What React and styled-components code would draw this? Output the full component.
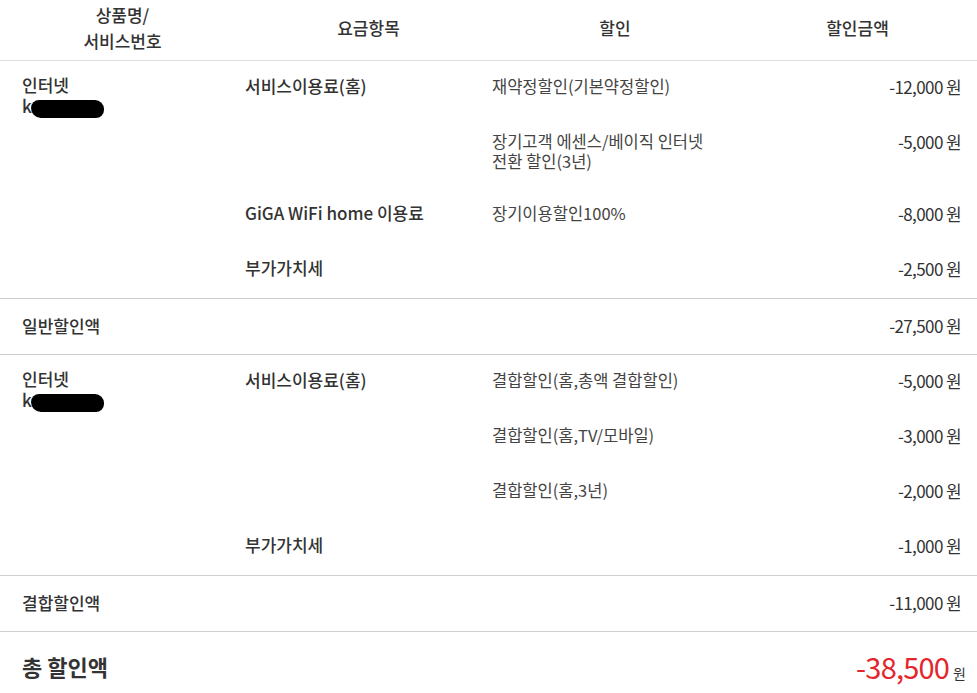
import React from 'react';
import styled, { createGlobalStyle } from 'styled-components';

const GlobalStyle = createGlobalStyle`
  body {
    margin: 0;
    background: #fff;
    font-family: 'Noto Sans CJK KR', 'Noto Sans', sans-serif;
    color: #333;
  }
`;

const Table = styled.div`
  width: 977px;
`;

const Columns = styled.div`
  display: grid;
  grid-template-columns: 245px 247px 246px 1fr;
`;

const Header = styled(Columns)`
  height: 60px;
  border-bottom: 1px solid #dedede;
`;

const HeadCell = styled.div`
  display: flex;
  align-items: center;
  justify-content: center;
  padding-bottom: 5px;
  text-align: center;
  font-size: 17px;
  font-weight: 500;
  line-height: 26px;
  color: #333;
`;

const Group = styled(Columns)`
  border-bottom: 1px solid #cfcfcf;
`;

const ProductCell = styled.div`
  grid-column: 1;
  grid-row: 1 / span ${(p) => p.rows};
  padding: 13px 0 0 22px;
  font-size: 17px;
  font-weight: 500;
  line-height: 21px;
`;

const Masked = styled.span`
  display: inline-block;
  width: 73px;
  height: 18px;
  margin-left: -1px;
  vertical-align: -5px;
  background: #000;
  border-radius: 9px 10px 9px 11px;
`;

const ItemCell = styled.div`
  grid-column: 2;
  padding: 14px 0 18px;
  font-size: 17px;
  font-weight: 500;
  line-height: 21px;
`;

const DiscountCell = styled.div`
  grid-column: 3;
  padding: 15px 0 17px;
  font-size: 16.5px;
  line-height: 20px;
  color: #444;
`;

const AmountCell = styled.div`
  grid-column: 4;
  padding: 15px 16px 19px 0;
  text-align: right;
  font-size: 17px;
  line-height: 21px;
  letter-spacing: -0.6px;
  color: #333;
`;

const SummaryLabel = styled.div`
  grid-column: 1 / span 3;
  padding: 16px 0 18px 22px;
  font-size: 17px;
  font-weight: 500;
  line-height: 21px;
`;

const SummaryAmount = styled(AmountCell)`
  padding: 16px 16px 18px 0;
`;

const TotalRow = styled.div`
  display: flex;
  justify-content: space-between;
  align-items: center;
  padding: 13px 11px 0 22px;
`;

const TotalLabel = styled.div`
  font-size: 22px;
  font-weight: 700;
  color: #333;
`;

const TotalAmount = styled.div`
  display: flex;
  align-items: baseline;
  gap: 4px;
  color: #e3262d;
  font-size: 29px;
  letter-spacing: -0.8px;
`;

const Won = styled.span`
  font-size: 14px;
  color: #333;
  letter-spacing: 0;
`;

const groups = [
  {
    product: '인터넷',
    rows: [
      { item: '서비스이용료(홈)', discount: '재약정할인(기본약정할인)', amount: '-12,000' },
      { item: '', discount: ['장기고객 에센스/베이직 인터넷', '전환 할인(3년)'], amount: '-5,000' },
      { item: 'GiGA WiFi home 이용료', discount: '장기이용할인100%', amount: '-8,000' },
      { item: '부가가치세', discount: '', amount: '-2,500' },
    ],
    summary: { label: '일반할인액', amount: '-27,500' },
  },
  {
    product: '인터넷',
    rows: [
      { item: '서비스이용료(홈)', discount: '결합할인(홈,총액 결합할인)', amount: '-5,000' },
      { item: '', discount: '결합할인(홈,TV/모바일)', amount: '-3,000' },
      { item: '', discount: '결합할인(홈,3년)', amount: '-2,000' },
      { item: '부가가치세', discount: '', amount: '-1,000' },
    ],
    summary: { label: '결합할인액', amount: '-11,000' },
  },
];

const App = () => {
  return (
    <Table>
      <GlobalStyle />
      <Header>
        <HeadCell>상품명/<br />서비스번호</HeadCell>
        <HeadCell>요금항목</HeadCell>
        <HeadCell>할인</HeadCell>
        <HeadCell>할인금액</HeadCell>
      </Header>
      {groups.map((g, gi) => (
        <React.Fragment key={gi}>
          <Group>
            <ProductCell rows={g.rows.length}>
              {g.product}
              <br />
              k<Masked />
            </ProductCell>
            {g.rows.map((r, ri) => (
              <React.Fragment key={ri}>
                <ItemCell>{r.item}</ItemCell>
                <DiscountCell>
                  {Array.isArray(r.discount)
                    ? r.discount.map((l, li) => <div key={li}>{l}</div>)
                    : r.discount}
                </DiscountCell>
                <AmountCell>{r.amount} 원</AmountCell>
              </React.Fragment>
            ))}
          </Group>
          <Group>
            <SummaryLabel>{g.summary.label}</SummaryLabel>
            <SummaryAmount>{g.summary.amount} 원</SummaryAmount>
          </Group>
        </React.Fragment>
      ))}
      <TotalRow>
        <TotalLabel>총 할인액</TotalLabel>
        <TotalAmount>
          -38,500<Won>원</Won>
        </TotalAmount>
      </TotalRow>
    </Table>
  );
};

export default App;
